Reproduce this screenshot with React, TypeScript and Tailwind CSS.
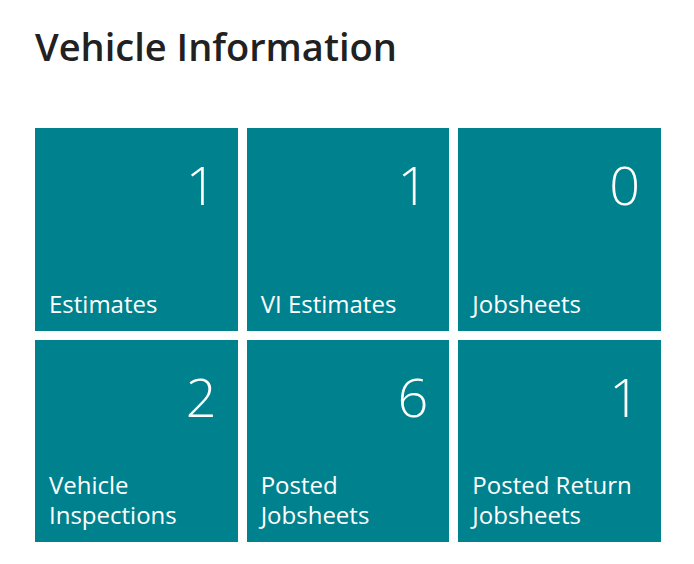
import React from "react";

type Cue = { label: string; count: number };

const cues: Cue[] = [
  { label: "Estimates", count: 1 },
  { label: "VI Estimates", count: 1 },
  { label: "Jobsheets", count: 0 },
  { label: "Vehicle Inspections", count: 2 },
  { label: "Posted Jobsheets", count: 6 },
  { label: "Posted Return Jobsheets", count: 1 },
];

function CueTile({ label, count }: Cue) {
  return (
    <button
      type="button"
      className="flex aspect-square flex-col justify-between bg-[#00828e] px-3.5 pt-[26px] pb-3 text-left text-white"
    >
      <span className="self-end pr-[7px] text-[54px] leading-[60px] font-light">{count}</span>
      <span className="text-[24px] leading-[30px]">{label}</span>
    </button>
  );
}

export default function App() {
  return (
    <main className="bg-white pt-[19px] pb-5 pr-[33px] pl-[35px] font-['Open_Sans','Noto_Sans',sans-serif]">
      <h1 className="text-[38px] leading-[54px] font-semibold text-[#212121]">
        Vehicle Information
      </h1>
      <section aria-label="Vehicle Information" className="mt-[55px] grid grid-cols-3 gap-[9px]">
        {cues.map((cue) => (
          <CueTile key={cue.label} label={cue.label} count={cue.count} />
        ))}
      </section>
    </main>
  );
}
